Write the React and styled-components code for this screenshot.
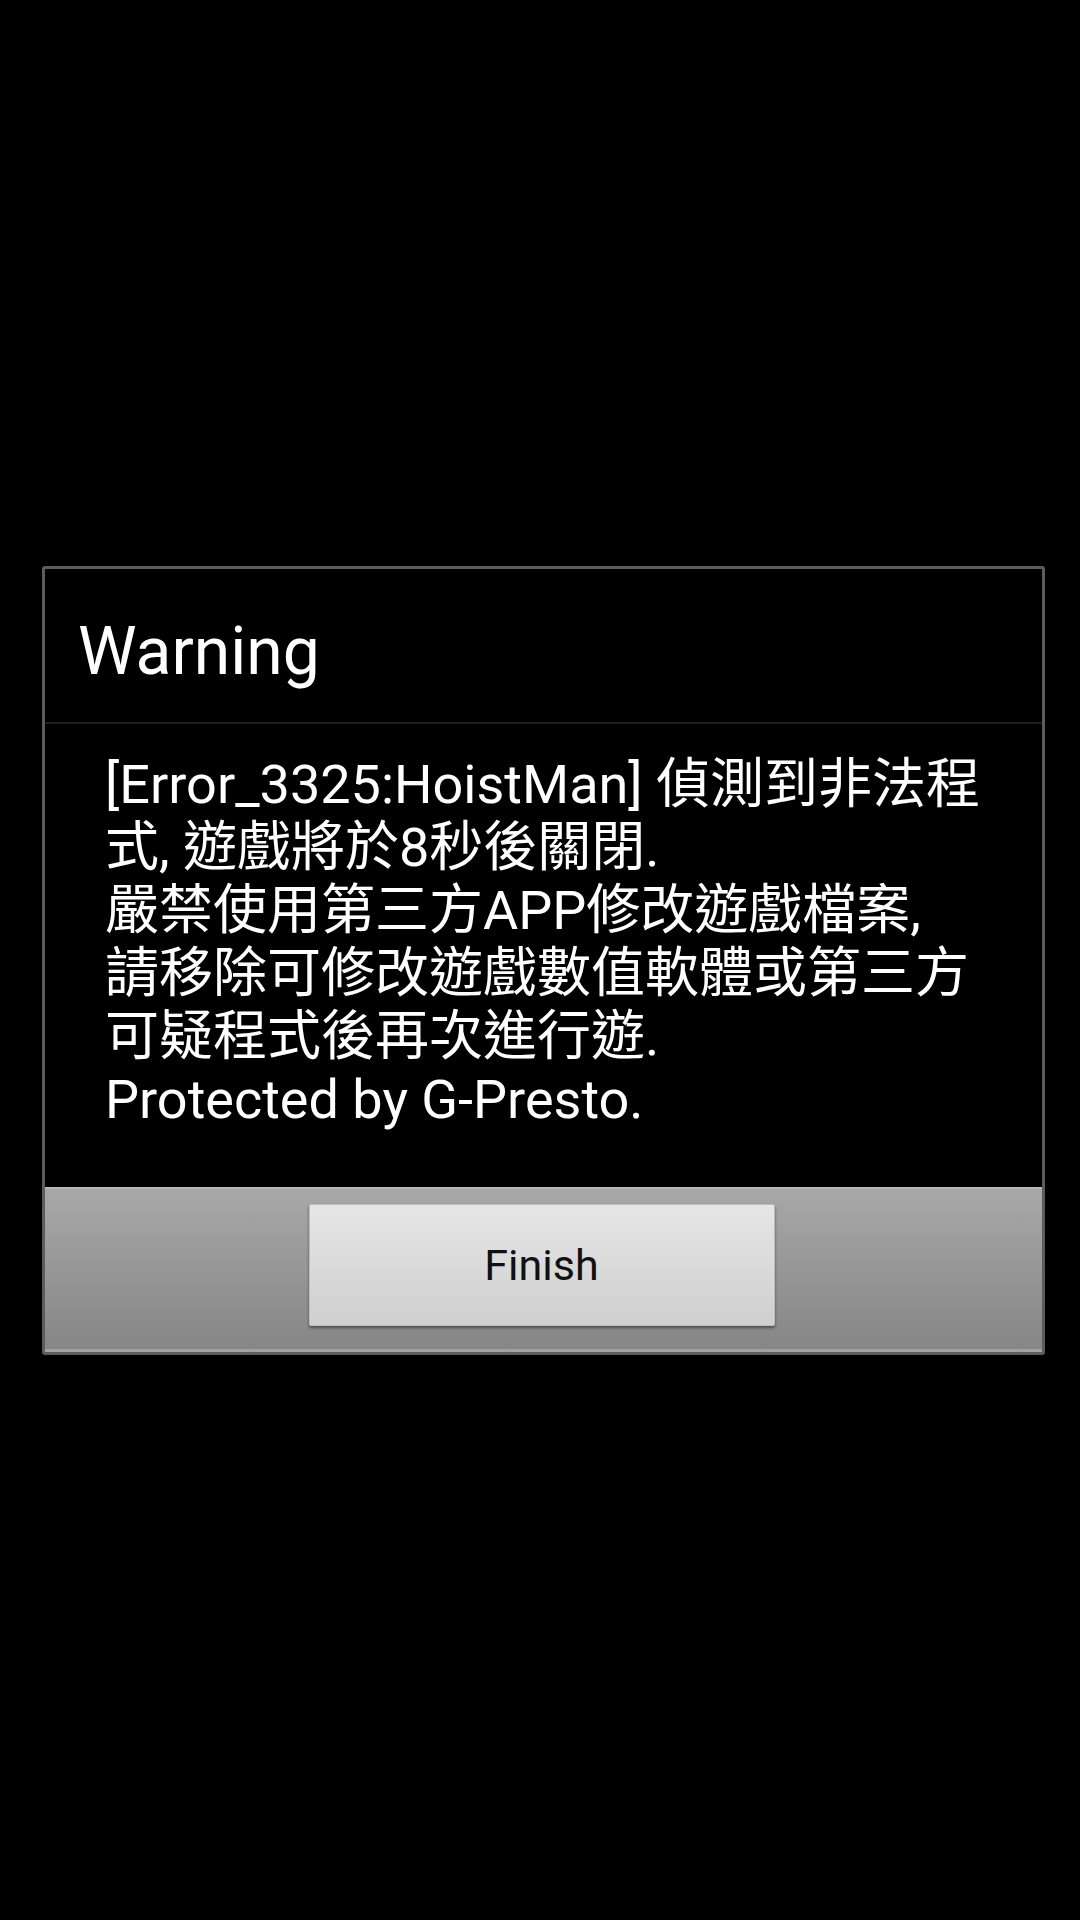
import React from "react";
import styled, { createGlobalStyle } from "styled-components";

const GlobalStyle = createGlobalStyle`
  html, body {
    margin: 0;
    padding: 0;
    background: #000;
  }
  body {
    font-family: Roboto, "Noto Sans CJK TC", "Noto Sans", sans-serif;
  }
`;

const Screen = styled.div`
  width: 1080px;
  height: 1920px;
  background: #000;
  display: flex;
  align-items: center;
`;

const Dialog = styled.div`
  margin-left: 42px;
  width: 1003px;
  box-sizing: border-box;
  border: 3px solid #5c5c5c;
  border-radius: 3px;
  background: #000;
  display: flex;
  flex-direction: column;
`;

const TitleBar = styled.div`
  height: 155px;
  box-sizing: border-box;
  padding: 50px 0 0 33px;
  border-bottom: 2px solid #1e1e1e;
  color: #fff;
  font-size: 66px;
  line-height: 66px;
`;

const Body = styled.div`
  padding: 29px 0 56px 60px;
  color: #fff;
  font-size: 54px;
  line-height: 63px;
`;

const Line = styled.div`
  white-space: nowrap;
`;

const ButtonBar = styled.div`
  height: 165px;
  box-sizing: border-box;
  border-top: 2px solid #b8b8b8;
  border-bottom: 3px solid #a2a2a2;
  background: linear-gradient(to bottom, #a8a8a8, #868686);
  display: flex;
  justify-content: center;
  padding-top: 15px;
`;

const Button = styled.button`
  width: 466px;
  height: 122px;
  margin-left: -4px;
  border: 1px solid #bdbdbd;
  border-radius: 2px;
  background: linear-gradient(to bottom, #e6e6e6, #cfcfcf);
  box-shadow: 0 2px 3px rgba(0, 0, 0, 0.45);
  color: #111;
  font-family: Roboto, "Noto Sans", sans-serif;
  font-size: 43px;
  padding: 0;
`;

const lines = [
  "[Error_3325:HoistMan] 偵測到非法程",
  "式, 遊戲將於8秒後關閉.",
  "嚴禁使用第三方APP修改遊戲檔案,",
  "請移除可修改遊戲數值軟體或第三方",
  "可疑程式後再次進行遊.",
  "Protected by G-Presto.",
];

export default function App() {
  return (
    <>
      <GlobalStyle />
      <Screen>
        <Dialog>
          <TitleBar>Warning</TitleBar>
          <Body>
            {lines.map((l) => (
              <Line key={l}>{l}</Line>
            ))}
          </Body>
          <ButtonBar>
            <Button>Finish</Button>
          </ButtonBar>
        </Dialog>
      </Screen>
    </>
  );
}
